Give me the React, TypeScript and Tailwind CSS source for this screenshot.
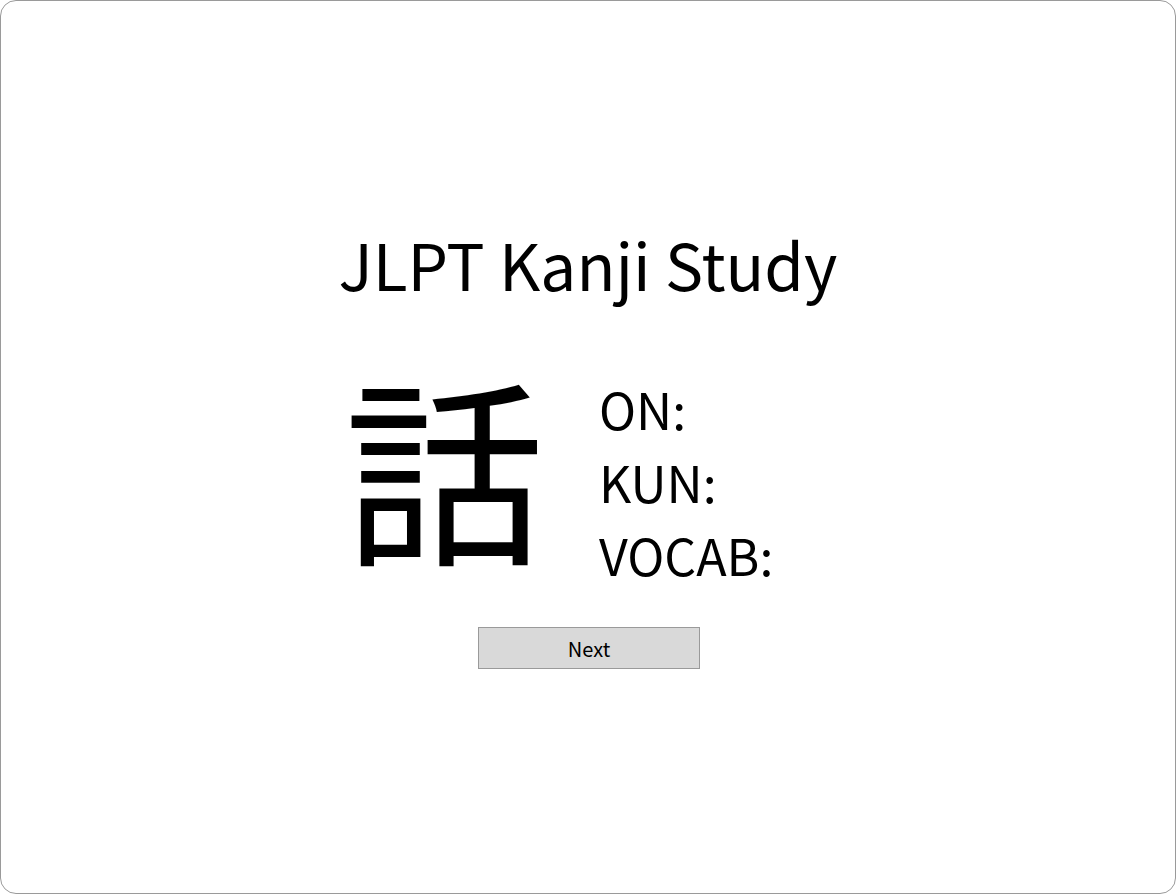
export default function App() {
  return (
    <div className="w-[1176px] h-[894px] bg-white">
      <div
        className="h-full w-full rounded-[16px] border border-[#9a9a9a] flex flex-col items-center pt-[222px] text-black"
        style={{ fontFamily: '"Noto Sans CJK JP", "Noto Sans", sans-serif' }}
      >
        <h1 className="text-[64px] leading-[80px] font-normal">JLPT Kanji Study</h1>
        <div className="mt-[60px] flex items-start w-[488px]">
          <div className="w-[200px] text-[200px] leading-[200px]">話</div>
          <div className="ml-[55px] mt-[9px] flex flex-col text-[50px] leading-[73px]">
            <span>ON:</span>
            <span>KUN:</span>
            <span>VOCAB:</span>
          </div>
        </div>
        <button className="mt-[36px] ml-[2px] w-[222px] h-[42px] bg-[#d9d9d9] border border-[#9a9a9a] text-[20px] leading-none pt-[2px]">
          Next
        </button>
      </div>
    </div>
  );
}
